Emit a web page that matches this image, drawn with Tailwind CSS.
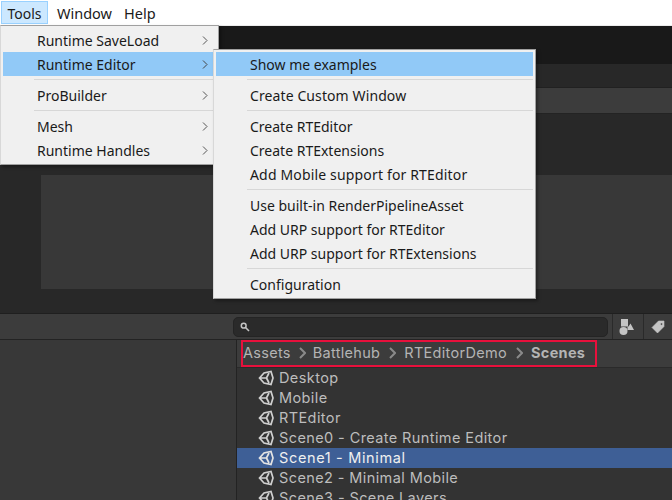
<!DOCTYPE html>
<html>
<head>
<meta charset="utf-8">
<script src="https://cdn.jsdelivr.net/npm/@tailwindcss/browser@4"></script>
</head>
<body class="w-[672px] h-[500px] overflow-hidden relative bg-[#282828] font-['Noto_Sans','Open_Sans',sans-serif]">
<!-- menu bar -->
<div class="h-[26px] bg-white border-b border-[#ececec] flex items-start pl-px pt-px text-[14px] leading-[25px] text-[#1a1a1a]">
  <div class="w-[47px] h-[23px] bg-[#cce8ff] border border-[#99d1ff] text-center leading-[23px]">Tools</div>
  <div class="ml-[9px] text-[14.5px]">Window</div>
  <div class="ml-[12px] text-[14.5px]">Help</div>
</div>
<!-- editor backdrop -->
<div class="h-[38px] bg-[#191919]"></div>
<div class="h-[24px] bg-[#282828] border-b border-[#212121]"></div>
<div class="h-[26px] bg-[#3c3c3c] border-b border-[#232323]"></div>
<div class="h-[199px] bg-[#282828] pt-[61px]">
  <div class="ml-[41px] h-[114px] bg-[#383838]"></div>
</div>
<!-- project toolbar -->
<div class="h-[27px] bg-[#3c3c3c] border-t border-[#1f1f1f] border-b-[#232323] border-b flex items-center">
  <div class="ml-[233px] w-[375px] h-[20px] rounded-[5px] bg-[#2a2a2a] border border-[#242424] flex items-center pl-1.5">
    <svg width="10" height="10" viewBox="0 0 10 10" fill="none" stroke="#c4c4c4"><circle cx="3.7" cy="3.7" r="2.4" stroke-width="1.5"/><path d="M5.5 5.5L9 9" stroke-width="1.6"/></svg>
  </div>
  <div class="ml-1 w-[31px] h-[25px] border-l border-[#2a2a2a] flex items-center justify-center pr-[2px]">
    <svg width="16" height="16" viewBox="0 0 16 16" fill="#c4c4c4"><rect x="2" y="0" width="7" height="7.5"/><path d="M8.5 11H15L11.5 4.5L9.5 7.5H8.5Z"/><circle cx="4.5" cy="12" r="4"/></svg>
  </div>
  <div class="w-[29px] h-[25px] border-l border-[#2a2a2a] flex items-center justify-center">
    <svg width="14" height="14" viewBox="0 0 14 14" fill="#c4c4c4"><path d="M7.5 1H13V6.5L6.5 13L1 7.5ZM10.5 3a1 1 0 1 0 .01 0Z" fill-rule="evenodd" stroke="#c4c4c4" stroke-width=".6" stroke-linejoin="round"/></svg>
  </div>
</div>
<!-- project body -->
<div class="flex h-[160px] font-['Inter','Noto_Sans',sans-serif]">
  <div class="w-[236px] bg-[#383838] border-r border-[#232323] box-content"></div>
  <div class="flex-1 bg-[#333333] min-w-0">
    <div class="h-[28px] bg-[#3c3c3c] border-b border-[#2a2a2a] text-[14.5px] tracking-[0.3px] text-[#b4b4b4]">
      <div class="ml-[4px] w-[356px] h-[27px] border-2 border-[#e8103c] flex items-center pb-[2px] whitespace-nowrap">
        <span>Assets</span>
        <svg class="ml-[8px] mr-[7px]" width="7" height="12" viewBox="0 0 7 12" fill="none" stroke="#8a8a8a" stroke-width="2"><path d="M1 1L6 6L1 11"/></svg>
        <span>Battlehub</span>
        <svg class="ml-[9px] mr-[8px]" width="7" height="12" viewBox="0 0 7 12" fill="none" stroke="#8a8a8a" stroke-width="2"><path d="M1 1L6 6L1 11"/></svg>
        <span>RTEditorDemo</span>
        <svg class="ml-[9px] mr-[8px]" width="7" height="12" viewBox="0 0 7 12" fill="none" stroke="#8a8a8a" stroke-width="2"><path d="M1 1L6 6L1 11"/></svg>
        <span class="font-bold">Scenes</span>
      </div>
    </div>
    <div class="text-[14.5px] tracking-[0.4px] leading-[20px] text-[#bdbdbd]">
      <div class="h-[20px] pl-[21px] flex items-center gap-[4px]"><svg width="17" height="16" viewBox="0 0 17 16" fill="none" stroke="#d0d0d0" stroke-width="1.7"><path d="M1.5 8L6 3L13 1.5L15 8L13 14.5L6 13ZM1.5 8H8.5L11 3M8.5 8L11 13"/></svg><span>Desktop</span></div>
      <div class="h-[20px] pl-[21px] flex items-center gap-[4px]"><svg width="17" height="16" viewBox="0 0 17 16" fill="none" stroke="#d0d0d0" stroke-width="1.7"><path d="M1.5 8L6 3L13 1.5L15 8L13 14.5L6 13ZM1.5 8H8.5L11 3M8.5 8L11 13"/></svg><span>Mobile</span></div>
      <div class="h-[20px] pl-[21px] flex items-center gap-[4px]"><svg width="17" height="16" viewBox="0 0 17 16" fill="none" stroke="#d0d0d0" stroke-width="1.7"><path d="M1.5 8L6 3L13 1.5L15 8L13 14.5L6 13ZM1.5 8H8.5L11 3M8.5 8L11 13"/></svg><span>RTEditor</span></div>
      <div class="h-[20px] pl-[21px] flex items-center gap-[4px]"><svg width="17" height="16" viewBox="0 0 17 16" fill="none" stroke="#d0d0d0" stroke-width="1.7"><path d="M1.5 8L6 3L13 1.5L15 8L13 14.5L6 13ZM1.5 8H8.5L11 3M8.5 8L11 13"/></svg><span>Scene0 - Create Runtime Editor</span></div>
      <div class="h-[20px] pl-[21px] flex items-center gap-[4px] bg-[#3e5f96] text-[#f0f0f0]"><svg width="17" height="16" viewBox="0 0 17 16" fill="none" stroke="#e4e4e4" stroke-width="1.7"><path d="M1.5 8L6 3L13 1.5L15 8L13 14.5L6 13ZM1.5 8H8.5L11 3M8.5 8L11 13"/></svg><span class="tracking-[0.65px]">Scene1 - Minimal</span></div>
      <div class="h-[20px] pl-[21px] flex items-center gap-[4px]"><svg width="17" height="16" viewBox="0 0 17 16" fill="none" stroke="#d0d0d0" stroke-width="1.7"><path d="M1.5 8L6 3L13 1.5L15 8L13 14.5L6 13ZM1.5 8H8.5L11 3M8.5 8L11 13"/></svg><span>Scene2 - Minimal Mobile</span></div>
      <div class="h-[20px] pl-[21px] flex items-center gap-[4px]"><svg width="17" height="16" viewBox="0 0 17 16" fill="none" stroke="#d0d0d0" stroke-width="1.7"><path d="M1.5 8L6 3L13 1.5L15 8L13 14.5L6 13ZM1.5 8H8.5L11 3M8.5 8L11 13"/></svg><span>Scene3 - Scene Layers</span></div>
    </div>
  </div>
</div>

<!-- Tools menu -->
<div class="absolute left-0 top-[25px] w-[219px] h-[140px] bg-[#f0f0f0] border border-[#a0a0a0] border-l-[#d8d8d8] shadow-[2px_2px_3px_rgba(0,0,0,0.35)] p-[2px] text-[14px] leading-[24px] text-[#1a1a1a]">
  <div class="h-[24px] pl-[34px] flex justify-between pr-[8px] leading-[26px]"><span>Runtime SaveLoad</span><svg class="mt-[8px]" width="6" height="9" viewBox="0 0 6 9" fill="none" stroke="#555"><path d="M1 .5L5 4.5L1 8.5"/></svg></div>
  <div class="h-[24px] pl-[34px] flex justify-between pr-[8px] bg-[#91c9f7] leading-[26px]"><span>Runtime Editor</span><svg class="mt-[8px]" width="6" height="9" viewBox="0 0 6 9" fill="none" stroke="#444"><path d="M1 .5L5 4.5L1 8.5"/></svg></div>
  <div class="h-px bg-[#d7d7d7] ml-[31px] mt-[3px] mb-[4px]"></div>
  <div class="h-[24px] pl-[34px] flex justify-between pr-[8px]"><span>ProBuilder</span><svg class="mt-[7px]" width="6" height="9" viewBox="0 0 6 9" fill="none" stroke="#555"><path d="M1 .5L5 4.5L1 8.5"/></svg></div>
  <div class="h-px bg-[#d7d7d7] ml-[31px] mt-[2px] mb-[4px]"></div>
  <div class="h-[24px] pl-[34px] flex justify-between pr-[8px]"><span>Mesh</span><svg class="mt-[7px]" width="6" height="9" viewBox="0 0 6 9" fill="none" stroke="#555"><path d="M1 .5L5 4.5L1 8.5"/></svg></div>
  <div class="h-[24px] pl-[34px] flex justify-between pr-[8px]"><span>Runtime Handles</span><svg class="mt-[7px]" width="6" height="9" viewBox="0 0 6 9" fill="none" stroke="#555"><path d="M1 .5L5 4.5L1 8.5"/></svg></div>
</div>
<!-- Runtime Editor submenu -->
<div class="absolute left-[213px] top-[49px] w-[323px] h-[250px] bg-[#f0f0f0] border border-[#a0a0a0] border-l-[#d8d8d8] shadow-[2px_2px_3px_rgba(0,0,0,0.35)] p-[2px] text-[14px] leading-[24px] text-[#1a1a1a]">
  <div class="h-[24px] pl-[34px] bg-[#91c9f7] leading-[26px]">Show me examples</div>
  <div class="h-px bg-[#d7d7d7] ml-[31px] mt-[3px] mb-[4px]"></div>
  <div class="h-[24px] pl-[34px] tracking-[0.1px]">Create Custom Window</div>
  <div class="h-px bg-[#d7d7d7] ml-[31px] mt-[2px] mb-[4px]"></div>
  <div class="h-[24px] pl-[34px]">Create RTEditor</div>
  <div class="h-[24px] pl-[34px]">Create RTExtensions</div>
  <div class="h-[24px] pl-[34px] tracking-[0.16px]">Add Mobile support for RTEditor</div>
  <div class="h-px bg-[#d7d7d7] ml-[31px] mt-[2px] mb-[4px]"></div>
  <div class="h-[24px] pl-[34px]">Use built-in RenderPipelineAsset</div>
  <div class="h-[24px] pl-[34px]">Add URP support for RTEditor</div>
  <div class="h-[24px] pl-[34px]">Add URP support for RTExtensions</div>
  <div class="h-px bg-[#d7d7d7] ml-[31px] mt-[2px] mb-[4px]"></div>
  <div class="h-[24px] pl-[34px]">Configuration</div>
</div>
</body>
</html>
